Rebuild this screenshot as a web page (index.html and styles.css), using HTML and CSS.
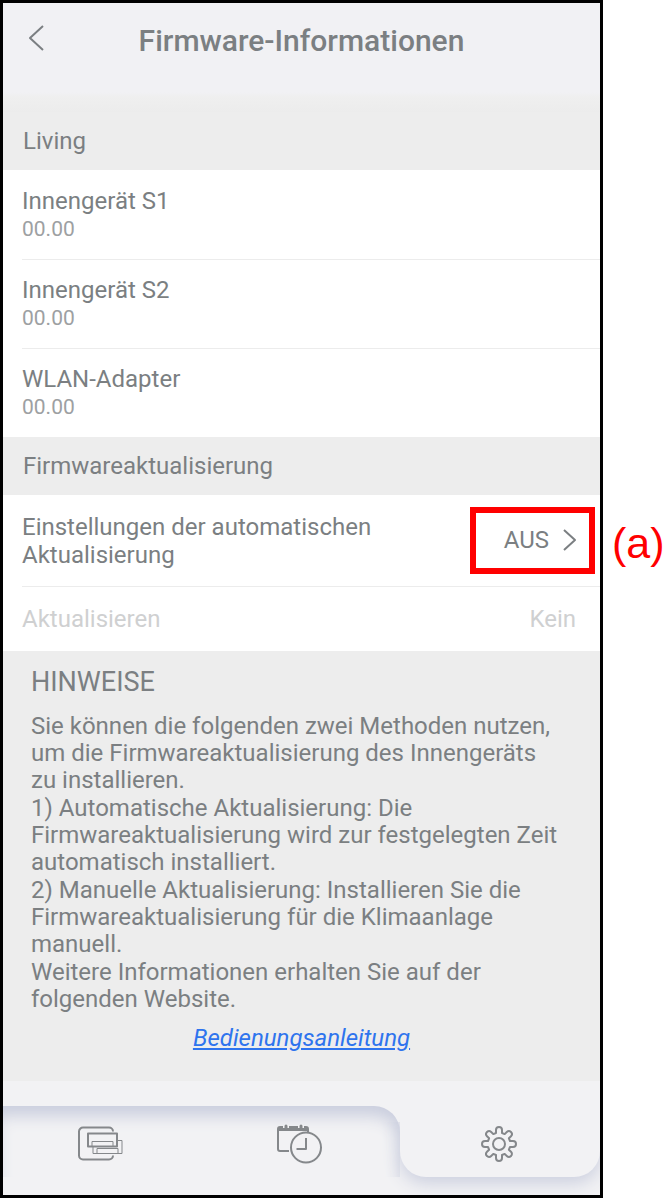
FILE: index.html
```
<!DOCTYPE html>
<html lang="de">
<head>
  <meta charset="UTF-8">
  <meta name="viewport" content="width=device-width, initial-scale=1">
  <title>Firmware-Informationen</title>
  <link rel="stylesheet" href="styles.css">
</head>
<body>
  <div class="phone">
    <header class="header">
      <button class="back" type="button" aria-label="Zurück">
        <svg width="18" height="28" viewBox="0 0 18 28"><path d="M16 2L3 14l13 12"/></svg>
      </button>
      <h1>Firmware-Informationen</h1>
    </header>

    <main>
      <h2 class="section">Living</h2>
      <ul class="list">
        <li class="item"><span>Innengerät S1</span><small>00.00</small></li>
        <li class="item"><span>Innengerät S2</span><small>00.00</small></li>
        <li class="item"><span>WLAN-Adapter</span><small>00.00</small></li>
      </ul>

      <h2 class="section">Firmwareaktualisierung</h2>
      <div class="list">
        <div class="setting">
          <span id="auto">Einstellungen der automatischen Aktualisierung</span>
          <button class="value" type="button" aria-describedby="auto">
            AUS
            <svg width="14" height="24" viewBox="0 0 14 24"><path d="M1 2l11 10L1 22"/></svg>
            <span class="callout">(a)</span>
          </button>
        </div>
        <div class="setting disabled">
          <span>Aktualisieren</span>
          <span>Kein</span>
        </div>
      </div>

      <section class="notes">
        <h3>HINWEISE</h3>
        <p>Sie können die folgenden zwei Methoden nutzen, um die Firmwareaktualisierung des Innengeräts zu installieren.</p>
        <p>1) Automatische Aktualisierung: Die Firmwareaktualisierung wird zur festgelegten Zeit automatisch installiert.</p>
        <p>2) Manuelle Aktualisierung: Installieren Sie die Firmwareaktualisierung für die Klimaanlage manuell.</p>
        <p>Weitere Informationen erhalten Sie auf der folgenden Website.</p>
        <a href="#">Bedienungsanleitung</a>
      </section>
    </main>

    <nav class="tabs">
      <div class="inactive">
        <button class="tab" type="button" aria-label="Geräte">
          <svg width="46" height="36" viewBox="0 0 46 36">
            <path d="M35 5.500a4 4 0 0 0-4-4H5a4 4 0 0 0-4 4v24a4 4 0 0 0 4 4h26a4 4 0 0 0 4-4"/>
            <path class="thin" d="M39 14.500h5v13H15v-7M19 27.500v-5h21v5"/>
            <path class="unit" d="M10 7.500h29v13H10z"/>
            <path class="thin" d="M14 20.500v-5h21v5"/>
          </svg>
        </button>
        <button class="tab" type="button" aria-label="Zeitplan">
          <svg width="46" height="40" viewBox="0 0 46 40">
            <path d="M31 8V5a2 2 0 0 0-2-2H3a2 2 0 0 0-2 2v20a2 2 0 0 0 2 2h9"/>
            <path class="solid" d="M1 3h30v4H1z"/>
            <path class="gap" d="M9 1v3M24 1v3"/>
            <path class="ring" d="M9 2v2M24 2v2"/>
            <circle cx="29" cy="23.500" r="15"/>
            <path d="M29 14v11h-9.500"/>
          </svg>
        </button>
      </div>
      <button class="tab active" type="button" aria-label="Einstellungen">
        <svg width="36" height="36" viewBox="0 0 36 36">
          <circle cx="18" cy="18" r="6"/>
          <path id="gear" d=""/>
        </svg>
      </button>
    </nav>
  </div>

  <script>
    // eight rounded teeth round the centre of the settings icon
    const point = (x, y, a) => {
      const c = Math.cos(a), s = Math.sin(a)
      return (18 + x * c - y * s).toFixed(1) + ' ' + (18 + x * s + y * c).toFixed(1)
    }
    let d = ''
    for (let i = 0; i < 8; i++) {
      const a = i * Math.PI / 4
      d += `${i ? 'L' : 'M'}${point(-3, -11, a)}L${point(-3, -14, a)}`
      d += `C${point(-3, -18, a)} ${point(3, -18, a)} ${point(3, -14, a)}`
      d += `L${point(3, -11, a)}`
    }
    document.querySelector('#gear').setAttribute('d', d + 'Z')
  </script>
</body>
</html>
```
FILE: styles.css
```
:root {
  --text: #7b7f82;
  --muted: #9da0a2;
  --off: #cfd0d1;
  --panel: #ededed;
  --bar: #f2f2f4;
  --shadow: #cacede;
}
* {
  box-sizing: border-box;
  margin: 0;
  padding: 0;
}
body {
  min-height: 100vh;
  padding: 0 66px 2px 0;
  display: flex;
  background: #fff;
  color: var(--text);
  font: 24px/28px Roboto, sans-serif;
}
button {
  border: 0;
  background: none;
  color: inherit;
  font: inherit;
  cursor: pointer;
}
svg {
  fill: none;
  stroke: currentColor;
  stroke-width: 2;
  stroke-linejoin: round;
}
.phone {
  flex: 1;
  min-width: 0;
  display: flex;
  flex-direction: column;
  border: 3px solid #000;
  background: var(--bar);
}
.header {
  display: grid;
  grid-template-columns: 66px 1fr 66px;
  align-items: center;
  padding: 16px 0 49px;
  background: linear-gradient(#f1f1f4 82%, #efefef 86%, #ececec);
}
.back {
  height: 44px;
  padding: 0 0 6px 24px;
}
.back svg {
  display: block;
}
.header h1 {
  font-size: 30px;
  font-weight: 500;
  line-height: 44px;
  text-align: center;
  white-space: nowrap;
}
.section {
  padding: 15px 20px;
  background: var(--panel);
  font-size: 24px;
  font-weight: 400;
}
.list {
  padding-left: 19px;
  background: #fff;
  list-style: none;
}
.item {
  display: flex;
  flex-direction: column;
  padding: 17px 0 16px;
}
.item + .item {
  padding-top: 16px;
}
.item + .item,
.setting + .setting {
  border-top: 1px solid #ececec;
}
.item small {
  color: var(--muted);
  font-size: 21px;
}
.setting {
  display: flex;
  justify-content: space-between;
  align-items: center;
  gap: 20px;
  padding: 12px 5px 12px 0;
}
.value {
  position: relative;
  flex: none;
  display: flex;
  align-items: center;
  gap: 14px;
  padding: 13px 12px 14px 28px;
  border: 6px solid #f00;
}
.callout {
  position: absolute;
  top: 2px;
  left: 100%;
  margin-left: 23px;
  color: #f00;
  font: 43px/56px "Liberation Sans", sans-serif;
}
.disabled {
  padding: 18px 24px 18px 0;
  color: var(--off);
}
.notes {
  padding: 17px 38px 29px 28px;
  background: var(--panel);
}
.notes h3 {
  margin-bottom: 17px;
  font-size: 27px;
  font-weight: 400;
}
.notes p {
  line-height: 27px;
}
.notes p + p {
  margin-top: 1px;
}
.notes a {
  display: block;
  margin: 11px -10px 0 0;
  color: #2f74ee;
  font-style: italic;
  text-align: center;
}
.tabs {
  flex: 1;
  display: flex;
  padding: 25px 0 18px;
  overflow: hidden;
}
.inactive {
  flex: 2;
  display: flex;
  border-radius: 0 26px 0 0;
  box-shadow: inset -2px 14px 16px -4px var(--shadow);
}
.tab {
  flex: 1;
  display: flex;
  justify-content: center;
  align-items: center;
  padding: 4px 2px 0 0;
}
.tab svg {
  stroke: #85888b;
}
.active {
  border-radius: 0 0 26px 26px;
  box-shadow: 0 6px 18px var(--shadow);
  clip-path: inset(16px -40px -40px -40px);
}
.tab .solid {
  fill: #85888b;
  stroke: none;
}
.tab .thin {
  stroke-width: 1;
}
.tab .unit {
  fill: var(--bar);
}
.tab .gap {
  stroke: var(--bar);
  stroke-width: 6;
}
.tab .ring {
  stroke-width: 3;
  stroke-linecap: round;
}
```
